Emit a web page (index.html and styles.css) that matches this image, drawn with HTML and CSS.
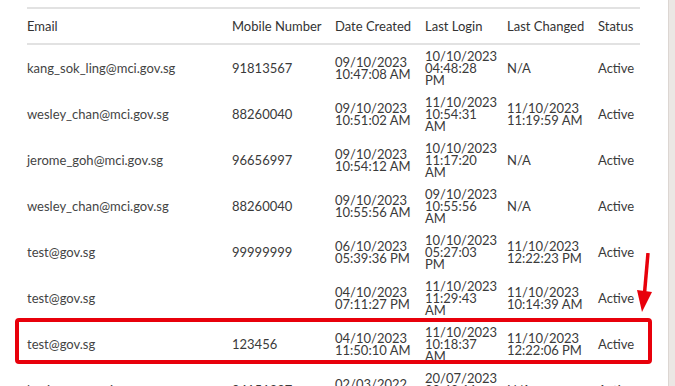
FILE: index.html
```html
<!DOCTYPE html>
<html>
<head>
<meta charset="utf-8">
<link rel="stylesheet" href="styles.css">
</head>
<body>
<div class="page">
  <div class="content">
    <table class="users">
      <colgroup>
        <col class="c-email"><col class="c-mobile"><col class="c-created"><col class="c-login"><col class="c-changed"><col class="c-status">
      </colgroup>
      <thead>
        <tr><th>Email</th><th>Mobile Number</th><th>Date Created</th><th>Last Login</th><th>Last Changed</th><th>Status</th></tr>
      </thead>
      <tbody>
        <tr><td>kang_sok_ling@mci.gov.sg</td><td>91813567</td><td>09/10/2023 10:47:08 AM</td><td><span class="d">10/10/2023</span> 04:48:28 PM</td><td>N/A</td><td>Active</td></tr>
        <tr><td>wesley_chan@mci.gov.sg</td><td>88260040</td><td>09/10/2023 10:51:02 AM</td><td><span class="d">11/10/2023</span> 10:54:31 AM</td><td>11/10/2023 11:19:59 AM</td><td>Active</td></tr>
        <tr><td>jerome_goh@mci.gov.sg</td><td>96656997</td><td>09/10/2023 10:54:12 AM</td><td><span class="d">10/10/2023</span> 11:17:20 AM</td><td>N/A</td><td>Active</td></tr>
        <tr><td>wesley_chan@mci.gov.sg</td><td>88260040</td><td>09/10/2023 10:55:56 AM</td><td><span class="d">09/10/2023</span> 10:55:56 AM</td><td>N/A</td><td>Active</td></tr>
        <tr><td>test@gov.sg</td><td>99999999</td><td>06/10/2023 05:39:36 PM</td><td><span class="d">10/10/2023</span> 05:27:03 PM</td><td>11/10/2023 12:22:23 PM</td><td>Active</td></tr>
        <tr><td>test@gov.sg</td><td></td><td>04/10/2023 07:11:27 PM</td><td><span class="d">11/10/2023</span> 11:29:43 AM</td><td>11/10/2023 10:14:39 AM</td><td>Active</td></tr>
        <tr class="marked"><td>test@gov.sg</td><td>123456</td><td>04/10/2023 11:50:10 AM</td><td><span class="d">11/10/2023</span> 10:18:37 AM</td><td>11/10/2023 12:22:06 PM</td><td>Active</td></tr>
        <tr><td>lewis_ang@mci.gov.sg</td><td>94151887</td><td>02/03/2022 09:16:44 AM</td><td><span class="d">20/07/2023</span> 09:42:11 AM</td><td>N/A</td><td>Active</td></tr>
      </tbody>
    </table>
    <div class="highlight"></div>
    <svg class="arrow" width="24" height="66" viewBox="0 0 24 66">
      <line x1="18" y1="0" x2="14" y2="46" stroke="#e8000b" stroke-width="3.5"/>
      <polygon points="7,37 22,39 12,59" fill="#e8000b"/>
    </svg>
  </div>
  <div class="scrollstrip"></div>
</div>
</body>
</html>
```

FILE: styles.css
```css
html, body {
  margin: 0;
  padding: 0;
  background: #fff;
}
.page {
  display: flex;
  width: 675px;
  height: 386px;
  overflow: hidden;
}
.content {
  position: relative;
  flex: 1;
  padding: 7px 0 0 27px;
}
.scrollstrip {
  width: 6px;
  background: #ebe7e4;
  border-left: 1px solid #dcd6d2;
}
.users {
  border-collapse: collapse;
  table-layout: fixed;
  width: 613px;
  font-family: Lato, "Open Sans", sans-serif;
  font-size: 13px;
  color: #333;
}
.c-email { width: 205px; }
.c-mobile { width: 103px; }
.c-created { width: 90px; }
.c-login { width: 82px; }
.c-changed { width: 91px; }
.c-status { width: 42px; }
.users thead tr {
  border-top: 2px solid #e2e2e2;
  border-bottom: 2px solid #e2e2e2;
}
.users th {
  font-weight: normal;
  text-align: left;
  height: 34px;
  padding: 0;
  color: #333;
  white-space: nowrap;
}
.users td {
  height: 46px;
  padding: 0 12px 0 0;
  line-height: 12px;
  vertical-align: middle;
  color: #3a3a3a;
}
.users td:first-child { color: #444; }
.users td:nth-child(4) { padding-right: 24px; }
.users td:last-child { padding-right: 0; }
.d { white-space: nowrap; }
.highlight {
  position: absolute;
  left: 15px;
  top: 318px;
  width: 629px;
  height: 38px;
  border: 4px solid #e8000b;
  border-radius: 4px;
}
.arrow {
  position: absolute;
  left: 630px;
  top: 253px;
}
```
